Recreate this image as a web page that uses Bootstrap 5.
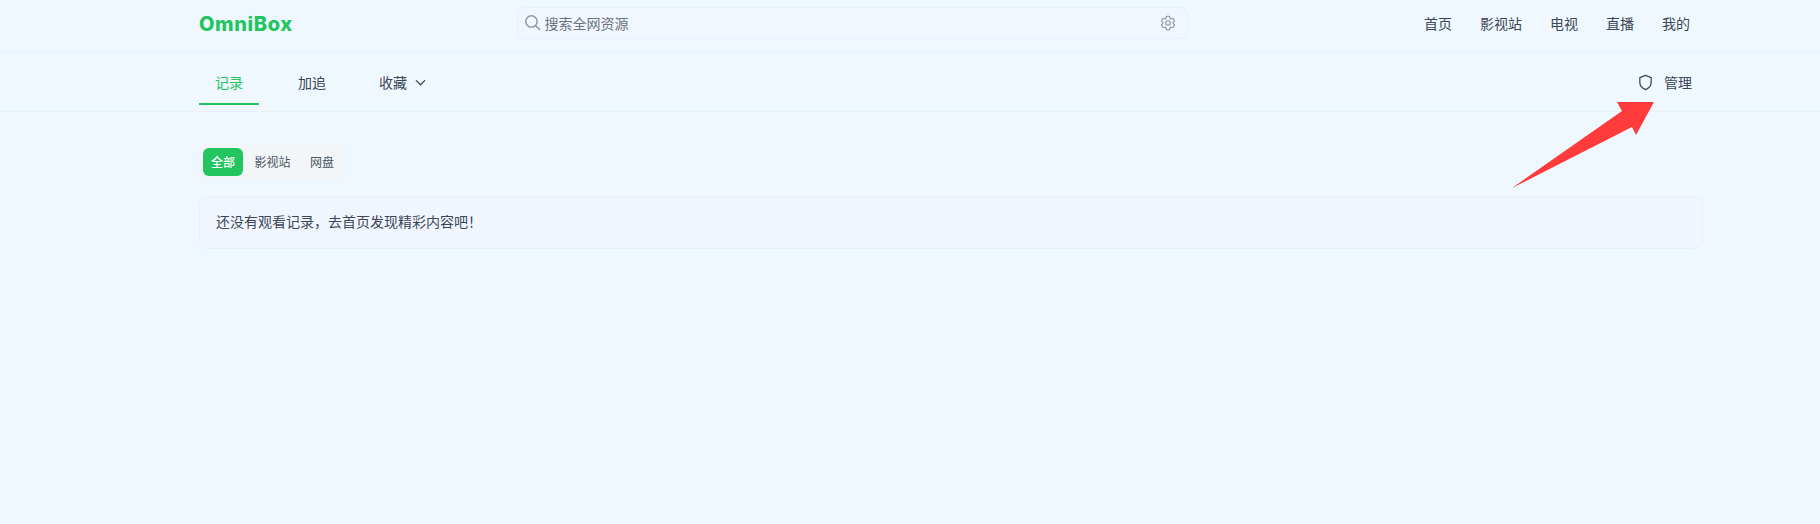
<!doctype html>
<html lang="zh-CN">
<head>
<meta charset="utf-8">
<title>OmniBox</title>
<link href="https://cdn.jsdelivr.net/npm/bootstrap@5.3.0/dist/css/bootstrap.min.css" rel="stylesheet">
<style>
html,body{height:100%}
body{background:#f0f8ff;color:#3b4656;font-family:"Inter","Noto Sans CJK SC",sans-serif;font-size:14px;overflow:hidden}
.wrap-x{width:1504px;margin-left:199px}
.top-bar{height:52px;padding-bottom:6px;border-bottom:1px solid #e9f0f6}
.brand-txt{color:#22c55e;font-size:20px;font-weight:800;width:317.5px;line-height:1;letter-spacing:.6px;padding-top:3px}
.search-box{width:671px;height:32px;border:1px solid #e8f0f8;border-radius:8px;background:#f0f7ff;padding:0 10px 0 6px;color:#6b7280}
.search-box input{border:0;background:transparent;outline:0;flex:1;padding:1px 0 0;margin-left:4px;font-size:14px;color:#3b4656;font-family:inherit}
.search-box input::placeholder{color:#6b7280;opacity:1}
.top-links{margin-left:auto;margin-right:13px;gap:28px;padding-top:1px}
.top-links a{color:#3b4656;text-decoration:none}
.sub-bar{height:60px;padding:10px 0 6px;border-bottom:1px solid #e9f0f6}
.sub-tab{height:43px;padding-bottom:1px;color:#3b4656;text-decoration:none;display:flex;align-items:center;justify-content:center;border-bottom:2px solid transparent}
.sub-tab.on{width:60px;color:#22c55e;border-bottom-color:#22c55e;margin-right:23px}
.tab-b{width:60px;margin-right:21px}
.tab-c{padding:0 0 1px 16px;gap:7px}
.manage-btn{margin-left:auto;margin-right:11px;gap:10px;padding-bottom:2px;color:#3b4656;text-decoration:none}
.chip-set{width:fit-content;margin-top:32px;padding:4px;gap:3.5px;background:#f2f6f9;border-radius:8px}
.chip-btn{font-size:12px;line-height:30px;height:28px;padding:0 8px;border-radius:6px;color:#4b5563;text-decoration:none;font-weight:400}
.chip-btn.on{background:#22c55e;color:#fff;font-weight:500}
.empty-box{margin-top:16px;height:53px;padding:0 16px 2px;border:1px solid #e9eff8;border-radius:10px;background:#f1f6fe;color:#3b4656}
.arrow-mark{position:absolute;left:0;top:0;width:1820px;height:524px;pointer-events:none}
</style>
</head>
<body>
<header class="top-bar">
  <div class="wrap-x d-flex align-items-center h-100">
    <div class="brand-txt">OmniBox</div>
    <div class="search-box d-flex align-items-center">
      <svg width="17" height="17" viewBox="0 0 24 24" fill="none" stroke="#8b95a3" stroke-width="2" stroke-linecap="round"><circle cx="10.500" cy="10.500" r="8"/><path d="M16.500 16.500 22 22"/></svg>
      <input type="text" placeholder="搜索全网资源" aria-label="搜索">
      <svg width="18" height="18" viewBox="0 0 24 24" fill="none" stroke="#8b95a3" stroke-width="1.500" stroke-linecap="round" stroke-linejoin="round"><path d="M9.594 3.94c.09-.542.56-.94 1.11-.94h2.593c.55 0 1.02.398 1.11.94l.213 1.281c.063.374.313.686.645.87.074.04.147.083.22.127.324.196.72.257 1.075.124l1.217-.456a1.125 1.125 0 011.37.49l1.296 2.247a1.125 1.125 0 01-.26 1.431l-1.003.827c-.293.24-.438.613-.431.992a6.759 6.759 0 010 .255c-.007.378.138.75.43.99l1.005.828c.424.35.534.954.26 1.43l-1.298 2.247a1.125 1.125 0 01-1.369.491l-1.217-.456c-.355-.133-.75-.072-1.076.124a6.57 6.57 0 01-.22.128c-.331.183-.581.495-.644.869l-.213 1.28c-.09.543-.56.941-1.11.941h-2.594c-.55 0-1.02-.398-1.11-.94l-.213-1.281c-.062-.374-.312-.686-.644-.87a6.52 6.52 0 01-.22-.127c-.325-.196-.72-.257-1.076-.124l-1.217.456a1.125 1.125 0 01-1.369-.49l-1.297-2.247a1.125 1.125 0 01.26-1.431l1.004-.827c.292-.24.437-.613.43-.992a6.932 6.932 0 010-.255c.007-.378-.138-.75-.43-.99l-1.004-.828a1.125 1.125 0 01-.26-1.43l1.297-2.247a1.125 1.125 0 011.37-.491l1.216.456c.356.133.751.072 1.076-.124.072-.044.146-.087.22-.128.332-.183.582-.495.644-.869l.214-1.281z"/><circle cx="12" cy="12" r="3"/></svg>
    </div>
    <nav class="top-links d-flex">
      <a href="#">首页</a><a href="#">影视站</a><a href="#">电视</a><a href="#">直播</a><a href="#">我的</a>
    </nav>
  </div>
</header>
<div class="sub-bar">
  <div class="wrap-x d-flex align-items-center h-100">
    <a href="#" class="sub-tab on">记录</a>
    <a href="#" class="sub-tab tab-b">加追</a>
    <a href="#" class="sub-tab tab-c">收藏
      <svg width="13" height="13" viewBox="0 0 14 14" fill="none" stroke="#3b4656" stroke-width="1.400" stroke-linecap="round" stroke-linejoin="round"><path d="M2.500 5 7 9.500 11.500 5"/></svg>
    </a>
    <a href="#" class="manage-btn d-flex align-items-center">
      <svg width="17" height="17" viewBox="0 0 24 24" fill="none" stroke="#3b4656" stroke-width="1.800" stroke-linejoin="round"><path d="M12 2 20 5v7c0 5-3.500 8.200-8 10-4.500-1.800-8-5-8-10V5z"/></svg>
      管理
    </a>
  </div>
</div>
<main class="wrap-x">
  <div class="chip-set d-flex">
    <a href="#" class="chip-btn on">全部</a>
    <a href="#" class="chip-btn">影视站</a>
    <a href="#" class="chip-btn">网盘</a>
  </div>
  <div class="empty-box d-flex align-items-center">还没有观看记录，去首页发现精彩内容吧！</div>
</main>
<svg class="arrow-mark" viewBox="0 0 1820 524"><polygon fill="#ff3b3b" points="1512,188 1622,111 1617,102 1654,102 1636,135 1632,127"/></svg>
</body>
</html>
